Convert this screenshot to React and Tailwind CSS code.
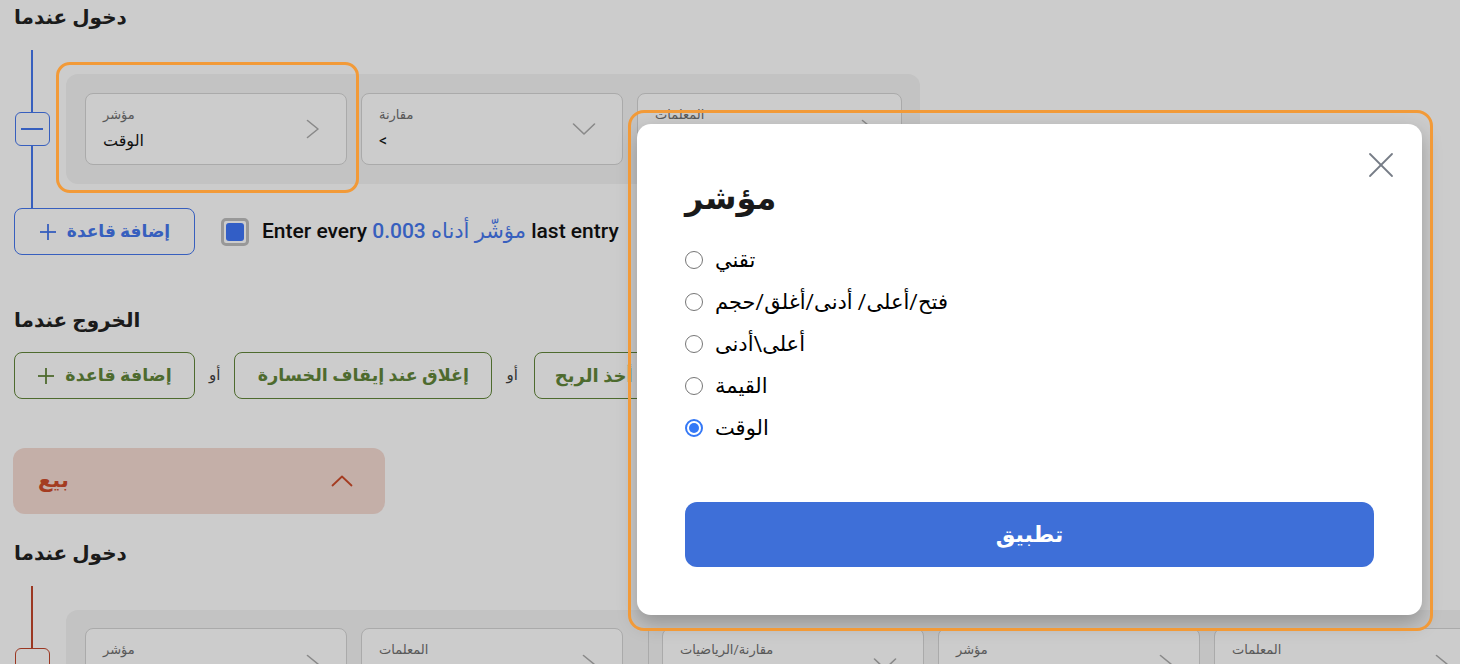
import React from 'react';

const blue = '#4577ee';

function ChevRight() {
  return (
    <svg width="14" height="20" viewBox="0 0 14 20" fill="none" stroke="#acacac" strokeWidth="1.6" strokeLinecap="round" strokeLinejoin="round">
      <polyline points="1.5,1.5 12,10 1.5,18.5" />
    </svg>
  );
}

function ChevDown() {
  return (
    <svg width="24" height="14" viewBox="0 0 24 14" fill="none" stroke="#acacac" strokeWidth="1.6" strokeLinecap="round" strokeLinejoin="round">
      <polyline points="1.5,2 12,12 22.5,2" />
    </svg>
  );
}

function Field({ label, value, icon, w = 'w-[262px]' }) {
  return (
    <div className={`${w} flex h-[72px] shrink-0 items-start justify-between rounded-[8px] border border-[#d5d5d5] bg-white pl-[17px] pr-[26px]`}>
      <div className="pt-[12px]">
        <div className="text-[13px] leading-[18px] text-[#6f6f6f]">{label}</div>
        {value && <div className="mt-[6px] text-[16px] leading-[22px] text-[#151515]">{value}</div>}
      </div>
      <div className="flex h-full items-center">{icon}</div>
    </div>
  );
}

function Plus({ color }) {
  return (
    <svg width="18" height="18" viewBox="0 0 18 18" fill="none" stroke={color} strokeWidth="1.8">
      <line x1="9" y1="1" x2="9" y2="17" />
      <line x1="1" y1="9" x2="17" y2="9" />
    </svg>
  );
}

function RuleRail({ color }) {
  return (
    <div className="flex w-[36px] shrink-0 flex-col items-center">
      <div className="h-[62px] w-[2px]" style={{ background: color }} />
      <div className="flex h-[34px] w-[35px] items-center justify-center rounded-[6px] border" style={{ borderColor: color }}>
        <div className="h-[2px] w-[22px]" style={{ background: color }} />
      </div>
      <div className="w-[2px] flex-1" style={{ background: color }} />
    </div>
  );
}

function Radio({ label, checked }) {
  return (
    <div className="flex h-[42px] items-center gap-[12px]">
      {checked ? (
        <div className="flex h-[18px] w-[18px] items-center justify-center rounded-full border-2 border-[#3478f6]">
          <div className="h-[10px] w-[10px] rounded-full bg-[#3478f6]" />
        </div>
      ) : (
        <div className="h-[18px] w-[18px] rounded-full border border-[#767676]" />
      )}
      <span className="text-[21px] leading-[26px] text-black">{label}</span>
    </div>
  );
}

export default function App() {
  return (
    <div className="relative h-[664px] w-[1460px] overflow-hidden bg-white font-['Roboto','DejaVu_Sans',sans-serif]">
      <div className="px-[14px] pt-[3px]">
        {/* buy: enter when */}
        <h2 className="text-[20px] font-bold leading-[28px] text-[#222]">دخول عندما</h2>
        <div className="mt-[19px] flex">
          <RuleRail color={blue} />
          <div className="my-[24px] ml-[16px] flex gap-[14px] rounded-[12px] bg-[#f4f4f4] py-[19px] pl-[19px] pr-[18px]">
            <Field label="مؤشر" value="الوقت" icon={<ChevRight />} />
            <Field label="مقارنة" value="<" icon={<ChevDown />} />
            <Field label="المعلمات" value="" icon={<ChevRight />} w="w-[265px]" />
          </div>
        </div>
        <div className="flex items-center">
          <button className="flex h-[47px] w-[181px] items-center justify-center gap-[10px] rounded-[8px] border border-[#4577ee] text-[17px] font-bold text-[#4577ee]">
            <Plus color={blue} />
            <span>إضافة قاعدة</span>
          </button>
          <div className="ml-[26px] flex h-[28px] w-[28px] items-center justify-center rounded-[5px] border-[3px] border-[#bfbfbf]">
            <div className="h-[18px] w-[18px] rounded-[3px] bg-[#3f76f8]" />
          </div>
          <p className="ml-[13px] text-[21px] font-medium text-[#111]">
            Enter every <span className="text-[#4577ee]">0.003 مؤشّر أدناه</span> last entry
          </p>
        </div>

        {/* exit when */}
        <h2 className="mt-[51px] text-[20px] font-bold leading-[28px] text-[#222]">الخروج عندما</h2>
        <div className="mt-[18px] flex items-center gap-[14px] text-[17.5px] font-bold text-[#62863a]">
          <button className="flex h-[47px] w-[181px] items-center justify-center gap-[10px] rounded-[8px] border border-[#62863a]">
            <Plus color="#62863a" />
            <span>إضافة قاعدة</span>
          </button>
          <span className="text-[15px] font-normal text-[#404040]">أو</span>
          <button className="flex h-[47px] w-[258px] items-center justify-center rounded-[8px] border border-[#62863a]">
            إغلاق عند إيقاف الخسارة
          </button>
          <span className="text-[15px] font-normal text-[#404040]">أو</span>
          <button className="ml-[2px] flex h-[47px] items-center justify-center rounded-[8px] border border-[#62863a] pl-[20px] pr-[24px] text-[18px]">
            أخذ الربح
          </button>
        </div>

        {/* sell */}
        <div className="-ml-px mt-[49px] flex h-[66px] w-[372px] items-center justify-between rounded-[12px] bg-[#f5dbd3] pl-[25px] pr-[32px]">
          <span className="text-[21px] font-bold text-[#ce4b2a]">بيع</span>
          <svg width="22" height="12" viewBox="0 0 22 12" fill="none" stroke="#ce4b2a" strokeWidth="1.8" strokeLinecap="round" strokeLinejoin="round">
            <polyline points="1.5,10.5 11,1.5 20.5,10.5" />
          </svg>
        </div>
        <h2 className="mt-[25px] text-[20px] font-bold leading-[28px] text-[#222]">دخول عندما</h2>
        <div className="mt-[19px] flex">
          <RuleRail color="#c2452a" />
          <div className="my-[24px] ml-[16px] flex rounded-[12px] bg-[#f4f4f4] py-[18px] pl-[19px]">
            <div className="flex gap-[14px]">
              <Field label="مؤشر" value="" icon={<ChevRight />} />
              <Field label="المعلمات" value="" icon={<ChevRight />} />
            </div>
            <div className="ml-[25px] flex gap-[14px] border-l border-[#d5d5d5] pl-[13px]">
              <Field label="مقارنة/الرياضيات" value="" icon={<ChevDown />} />
              <Field label="مؤشر" value="" icon={<ChevRight />} />
              <Field label="المعلمات" value="" icon={<ChevRight />} />
            </div>
          </div>
        </div>
      </div>

      {/* dim overlay */}
      <div className="absolute inset-0 bg-black/20" />

      {/* highlight annotation on indicator field */}
      <div className="absolute left-[56px] top-[62px] h-[131px] w-[303px] rounded-[14px] border-[3px] border-[#f29a38]" />

      {/* modal */}
      <div className="absolute left-[637px] top-[124px] h-[491px] w-[785px] rounded-[14px] bg-white px-[48px] pt-[54px] shadow-[0_8px_20px_rgba(0,0,0,0.25)]">
        <svg className="absolute right-[28px] top-[28px]" width="26" height="26" viewBox="0 0 26 26" fill="none" stroke="#767c86" strokeWidth="1.8" strokeLinecap="round">
          <line x1="2" y1="2" x2="24" y2="24" />
          <line x1="24" y1="2" x2="2" y2="24" />
        </svg>
        <h3 className="text-[32px] font-bold leading-[40px] text-[#1a1a1a]">مؤشر</h3>
        <div className="mt-[21px] flex flex-col">
          <Radio label="تقني" />
          <Radio label="فتح/أعلى/ أدنى/أغلق/حجم" />
          <Radio label="أعلى\أدنى" />
          <Radio label="القيمة" />
          <Radio label="الوقت" checked />
        </div>
        <button className="mt-[53px] flex h-[65px] w-full items-center justify-center rounded-[12px] bg-[#3e6fd8] text-[22px] font-bold text-white">
          تطبيق
        </button>
      </div>
      <div className="absolute left-[628px] top-[110px] h-[521px] w-[805px] rounded-[16px] border-[3px] border-[#f29a38]" />
    </div>
  );
}
